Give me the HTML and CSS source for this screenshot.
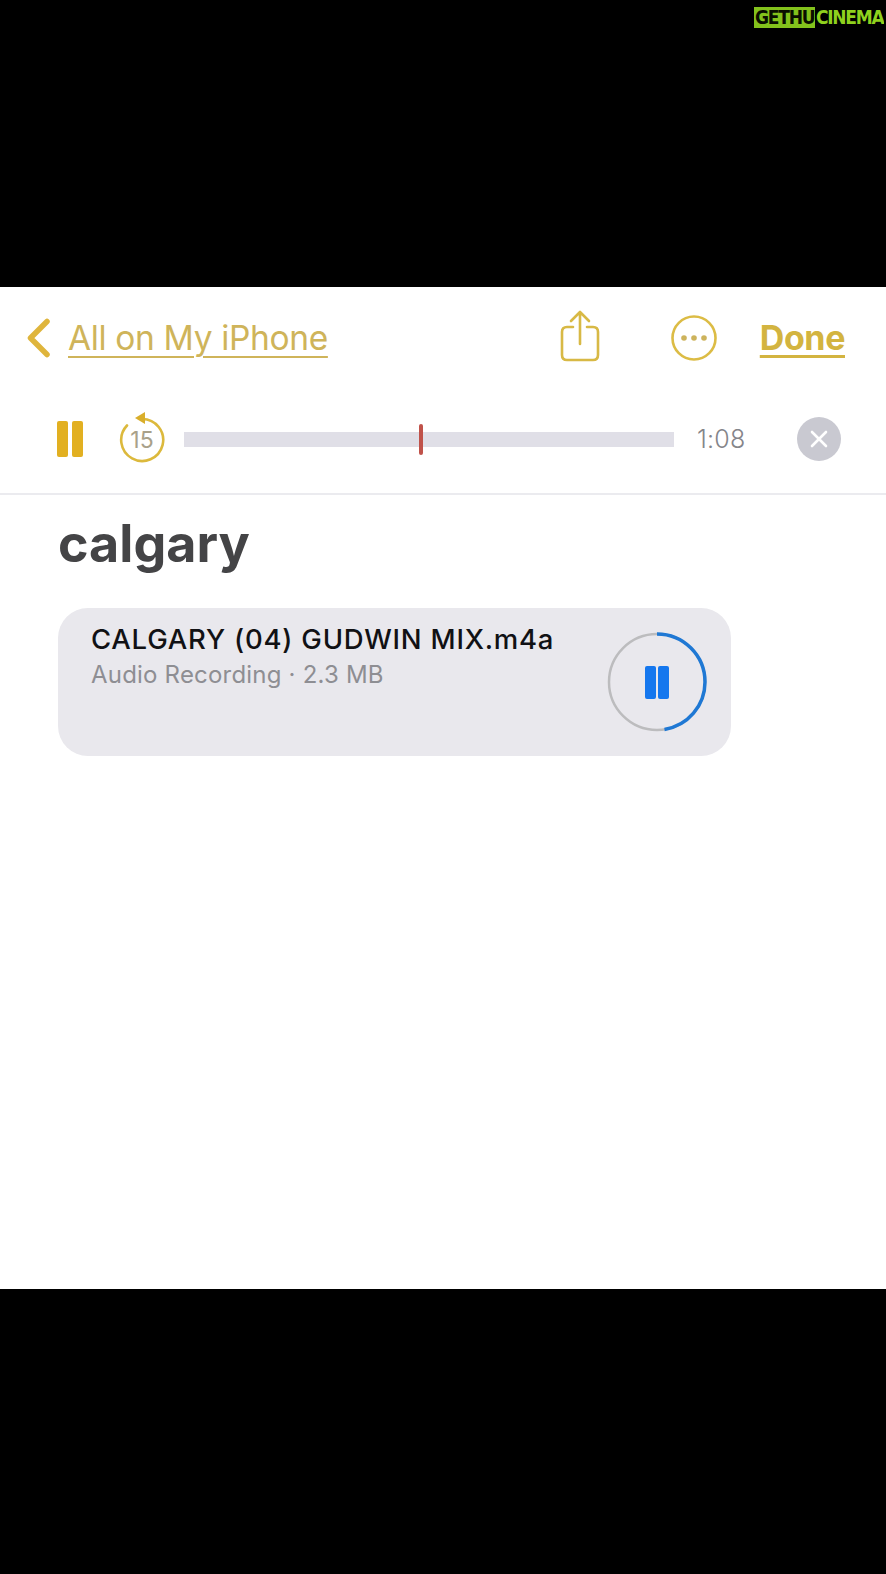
FILE: index.html
```html
<!DOCTYPE html>
<html lang="en">
<head>
<meta charset="utf-8">
<title>calgary</title>
<link rel="stylesheet" href="styles.css">
</head>
<body>
<header class="band band-top">
  <div class="logo"><span class="logo-box">GETHU</span><span class="logo-rest">CINEMA</span></div>
</header>
<main class="sheet">
  <nav class="nav">
    <svg class="chevron" width="24" height="42" viewBox="0 0 24 42"><path d="M21 4.5 L4.5 21 L21 37.5" fill="none" stroke="#dfb53c" stroke-width="5.5" stroke-linecap="round" stroke-linejoin="round"/></svg>
    <a class="back">All on My iPhone</a>
    <svg class="share" width="40" height="52" viewBox="0 0 40 52"><path d="M13 17 H7 Q2 17 2 22 V45 Q2 50 7 50 H33 Q38 50 38 45 V22 Q38 17 33 17 H27 M20 34 V2 M11 11 L20 2 L29 11" fill="none" stroke="#d8b945" stroke-width="2.6" stroke-linecap="round" stroke-linejoin="round"/></svg>
    <svg class="more" width="46" height="46" viewBox="0 0 46 46"><circle cx="23" cy="23" r="21.5" fill="none" stroke="#dcbc45" stroke-width="2.6"/><circle cx="13" cy="23" r="2.8" fill="#cdb35c"/><circle cx="23" cy="23" r="2.8" fill="#cdb35c"/><circle cx="33" cy="23" r="2.8" fill="#cdb35c"/></svg>
    <a class="done">Done</a>
  </nav>
  <div class="player">
    <svg class="pause" width="26" height="36" viewBox="0 0 26 36"><rect x="0" y="0" width="11" height="36" rx="2" fill="#e2b021"/><rect x="15" y="0" width="11" height="36" rx="2" fill="#e2b021"/></svg>
    <div class="replay">
      <svg width="46" height="52" viewBox="0 0 46 52"><path d="M23 8 A21 21 0 1 1 8 14.5" fill="none" stroke="#dcb93c" stroke-width="2.6" stroke-linecap="round"/><path d="M16 7 L26 1 V13 Z" fill="#d9ae2b"/></svg>
      <span class="replay-num">15</span>
    </div>
    <div class="track"><span class="playhead"></span></div>
    <span class="time">1:08</span>
    <span class="close"><svg width="20" height="20" viewBox="0 0 20 20"><path d="M3 3 L17 17 M17 3 L3 17" stroke="#fff" stroke-width="2.6" stroke-linecap="round"/></svg></span>
  </div>
  <article class="note">
    <h1 class="title">calgary</h1>
    <section class="card">
      <div class="card-text">
        <div class="file">CALGARY (04) GUDWIN MIX.m4a</div>
        <div class="meta">Audio Recording · 2.3 MB</div>
      </div>
      <svg class="progress" width="100" height="100" viewBox="0 0 100 100">
        <circle cx="50" cy="50" r="48" fill="none" stroke="#bcbcbe" stroke-width="2.5"/>
        <circle class="arc" cx="50" cy="50" r="48" fill="none" stroke="#1f78d4" stroke-width="3.5" pathLength="100" stroke-dasharray="47.5 100"/>
        <rect x="38" y="34" width="11" height="33" rx="2" fill="#1577ee"/>
        <rect x="51" y="34" width="11" height="33" rx="2" fill="#1577ee"/>
      </svg>
    </section>
  </article>
</main>
<footer class="band band-bottom"></footer>
</body>
</html>
```
FILE: styles.css
```css
* { box-sizing: border-box; }
html, body { margin: 0; padding: 0; }
body {
  width: 886px;
  height: 1574px;
  display: flex;
  flex-direction: column;
  background: #000;
  font-family: Inter, "Liberation Sans", sans-serif;
  overflow: hidden;
}
.band { background: #000; flex: none; }
.band-top {
  height: 287px;
  display: flex;
  justify-content: flex-end;
  align-items: flex-start;
  padding: 7px 2px 0 0;
}
.band-bottom { height: 285px; }
.logo {
  display: flex;
  align-items: stretch;
  height: 21px;
  font-family: "DejaVu Sans Condensed", "DejaVu Sans", sans-serif;
  font-weight: 700;
  font-size: 19px;
  line-height: 21px;
  white-space: nowrap;
}
.logo-box { background: #83c21c; color: #0a0f00; width: 61px; padding-left: 1px; letter-spacing: -1.2px; overflow: hidden; }
.logo-rest { color: #8fd11e; width: 69px; padding-left: 1px; letter-spacing: -1.3px; overflow: hidden; }
.sheet {
  flex: none;
  height: 1002px;
  background: #fff;
  display: flex;
  flex-direction: column;
}
.nav {
  display: flex;
  align-items: center;
  height: 101px;
  padding: 0 41px 0 26px;
}
.chevron { flex: none; }
.back {
  margin-left: 18px;
  font-size: 33.5px;
  line-height: 40px;
  color: #cfb45a;
  text-decoration: underline;
  text-decoration-thickness: 2px;
  text-underline-offset: 6px;
  letter-spacing: -0.35px;
}
.share { margin-left: auto; flex: none; margin-top: -4px; }
.more { margin-left: 71px; flex: none; }
.done {
  margin-left: 43px;
  font-size: 34px;
  font-weight: 700;
  line-height: 40px;
  color: #d3b440;
  text-decoration: underline;
  text-decoration-thickness: 3px;
  text-underline-offset: 5px;
  letter-spacing: -0.4px;
}
.player {
  display: flex;
  align-items: center;
  height: 107px;
  padding: 0 45px 3px 57px;
  border-bottom: 2px solid #ebebef;
}
.pause { flex: none; }
.replay {
  position: relative;
  width: 46px;
  height: 52px;
  margin: -4px 0 0 36px;
  flex: none;
}
.replay svg { display: block; }
.replay-num {
  position: absolute;
  left: 0;
  right: 0;
  top: 14px;
  text-align: center;
  font-size: 23px;
  line-height: 30px;
  color: #a9a18a;
}
.track {
  position: relative;
  width: 490px;
  height: 15px;
  margin-left: 19px;
  background: #e0dfe7;
  flex: none;
}
.playhead {
  position: absolute;
  left: 235px;
  top: -8px;
  width: 4px;
  height: 31px;
  border-radius: 2px;
  background: #c0524a;
}
.time {
  margin-left: 23px;
  font-size: 25px;
  font-weight: 300;
  color: #85858a;
  letter-spacing: 0.2px;
  line-height: 30px;
  flex: none;
}
.close {
  margin-left: auto;
  width: 44px;
  height: 44px;
  border-radius: 50%;
  background: #c9c9d1;
  display: flex;
  align-items: center;
  justify-content: center;
  flex: none;
}
.note { padding: 18px 0 0 58px; }
.title {
  margin: 0;
  font-size: 52px;
  line-height: 62px;
  font-weight: 700;
  color: #444446;
}
.card {
  width: 673px;
  height: 148px;
  margin-top: 33px;
  padding: 14px 24px 0 33px;
  background: #e9e8ed;
  border-radius: 30px;
  display: flex;
  justify-content: space-between;
  align-items: flex-start;
}
.file {
  font-size: 27.5px;
  font-weight: 500;
  line-height: 34px;
  color: #111114;
  letter-spacing: 0.78px;
  white-space: nowrap;
}
.meta {
  margin-top: 2px;
  font-size: 24px;
  line-height: 34px;
  color: #8e8e93;
  letter-spacing: 0.2px;
  white-space: nowrap;
}
.progress { flex: none; margin-top: 10px; }
.arc { transform: rotate(-90deg); transform-origin: 50px 50px; }
```
